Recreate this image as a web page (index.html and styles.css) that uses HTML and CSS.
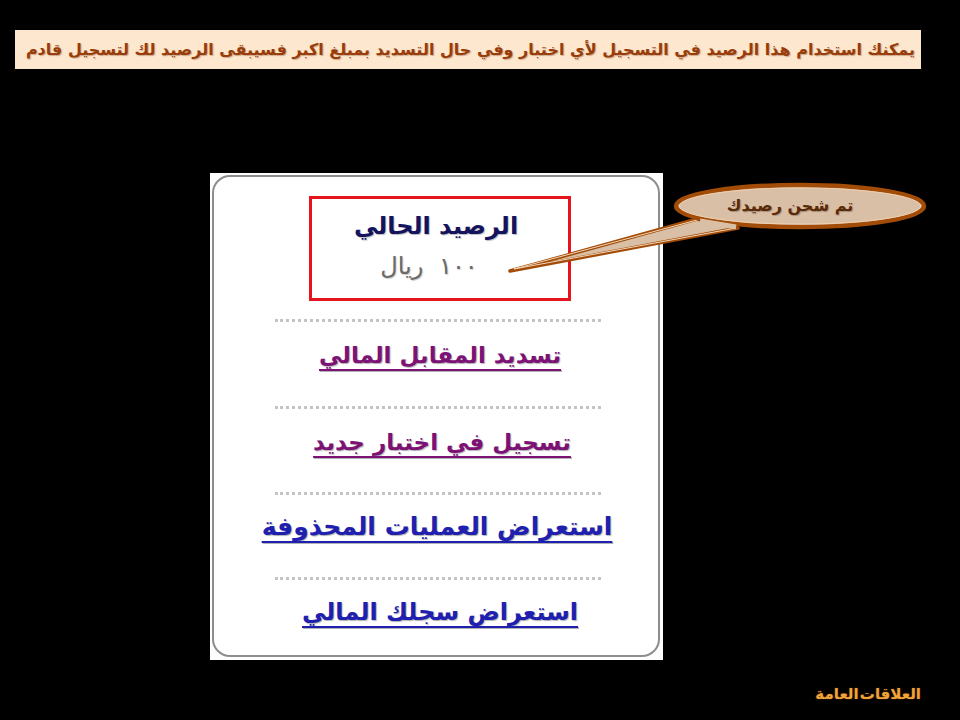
FILE: index.html
```html
<!DOCTYPE html>
<html lang="ar">
<head>
<meta charset="utf-8">
<link rel="stylesheet" href="styles.css">
</head>
<body>
<div class="slide">
  <div class="banner" dir="rtl">يمكنك استخدام هذا الرصيد في التسجيل لأي اختبار وفي حال التسديد بمبلغ اكبر فسيبقى الرصيد لك لتسجيل قادم</div>

  <div class="card">
    <div class="card-inner" dir="rtl">
      <div class="balance">
        <div class="balance-title">الرصيد الحالي</div>
        <div class="balance-amount">١٠٠ ريال</div>
      </div>
      <div class="sep"></div>
      <a class="link visited l1">تسديد المقابل المالي</a>
      <div class="sep"></div>
      <a class="link visited l2">تسجيل في اختبار جديد</a>
      <div class="sep"></div>
      <a class="link blue l3">استعراض العمليات المحذوفة</a>
      <div class="sep"></div>
      <a class="link blue l4">استعراض سجلك المالي</a>
    </div>
  </div>

  <div class="footer" dir="rtl">العلاقات العامة</div>

  <div class="callout">
    <svg width="960" height="720" viewBox="0 0 960 720">
      <path d="M 697 219 L 510 271 L 738 228 Z" fill="#d9bfa5" stroke="#a24c08" stroke-width="3.5" stroke-linejoin="round"/>
      <path d="M 697 220 L 514 269 L 736 228" fill="none" stroke="#f3d6b8" stroke-width="1"/>
      <ellipse cx="800" cy="206" rx="124" ry="21" fill="#d9bfa5" stroke="#a24c08" stroke-width="4.5"/>
      <ellipse cx="800" cy="206" rx="120.5" ry="18" fill="none" stroke="#f0d0b0" stroke-width="1"/>
      <path d="M 700 221 L 736 227" stroke="#d9bfa5" stroke-width="5"/>
    </svg>
    <div class="callout-text" dir="rtl">تم شحن رصيدك</div>
  </div>
</div>
</body>
</html>
```

FILE: styles.css
```css
html, body {
  margin: 0;
  padding: 0;
  background: #000;
}
.slide {
  position: relative;
  width: 960px;
  height: 720px;
  overflow: hidden;
  background: #000;
  font-family: "DejaVu Sans", "Liberation Sans", sans-serif;
  padding-top: 30px;
  box-sizing: border-box;
}
.banner {
  margin-left: 15px;
  width: 906px;
  height: 39px;
  box-sizing: border-box;
  background: #fde7cf;
  color: #983c0b;
  font-weight: bold;
  font-size: 16px;
  line-height: 39px;
  padding-right: 6px;
  text-align: right;
  white-space: nowrap;
  text-shadow: 1px 1px 1px rgba(120, 60, 20, 0.35);
}
.card {
  margin-top: 104px;
  margin-left: 210px;
  width: 453px;
  height: 487px;
  background: #fdfdfd;
  padding: 2px 3px 3px 2px;
  box-sizing: border-box;
}
.card-inner {
  height: 100%;
  box-sizing: border-box;
  border: 2px solid #8d8d8d;
  border-radius: 18px;
  background: #fff;
  display: flex;
  flex-direction: column;
  align-items: center;
  padding-top: 19px;
}
.balance {
  width: 262px;
  height: 105px;
  box-sizing: border-box;
  border: 3px solid #e4141c;
  margin-left: 8px;
  display: flex;
  flex-direction: column;
  align-items: center;
  padding-top: 12px;
}
.balance-title {
  color: #14145e;
  font-size: 24px;
  font-weight: bold;
  line-height: 30px;
  margin-right: 8px;
  text-shadow: 1px 1px 1px rgba(0, 0, 0, 0.25);
}
.balance-amount {
  color: #6a6a6a;
  font-size: 24px;
  line-height: 30px;
  margin-top: 10px;
  margin-right: 22px;
  word-spacing: 8px;
  letter-spacing: 1px;
  text-shadow: 1px 1px 1px rgba(0, 0, 0, 0.2);
}
.sep {
  width: 326px;
  height: 0;
  border-top: 3px dotted #c4c4c4;
  margin-left: 4px;
}
.sep:nth-child(2) { margin-top: 18px; }
.link {
  display: block;
  font-size: 23px;
  font-weight: bold;
  line-height: 30px;
  text-decoration: underline;
  text-decoration-thickness: 2px;
  text-underline-offset: 6px;
  text-shadow: 1px 1px 1px rgba(0, 0, 0, 0.3);
  white-space: nowrap;
}
.visited { color: #7c1176; }
.blue { color: #2020b0; }
.l1 { margin: 18px 0 36px 8px; }
.l2 { margin: 18px 0 35px 12px; font-size: 23px; }
.l3 { margin: 17px 0 35px 2px; font-size: 25px; }
.l4 { margin: 17px 0 0 8px; font-size: 24px; }
.footer {
  margin-top: 22px;
  width: 921px;
  text-align: right;
  color: #f0a43a;
  font-weight: bold;
  font-size: 15px;
  line-height: 24px;
  word-spacing: -4px;
  text-shadow: 0 0 2px rgba(200, 100, 0, 0.5);
}
.callout {
  position: absolute;
  left: 0;
  top: 0;
  width: 960px;
  height: 720px;
  pointer-events: none;
}
.callout svg {
  position: absolute;
  left: 0;
  top: 0;
}
.callout-text {
  position: absolute;
  left: 700px;
  top: 194px;
  width: 180px;
  text-align: center;
  color: #5a2a08;
  font-size: 16px;
  font-weight: bold;
  line-height: 24px;
  text-shadow: 1px 1px 1px rgba(0, 0, 0, 0.25);
}
```
